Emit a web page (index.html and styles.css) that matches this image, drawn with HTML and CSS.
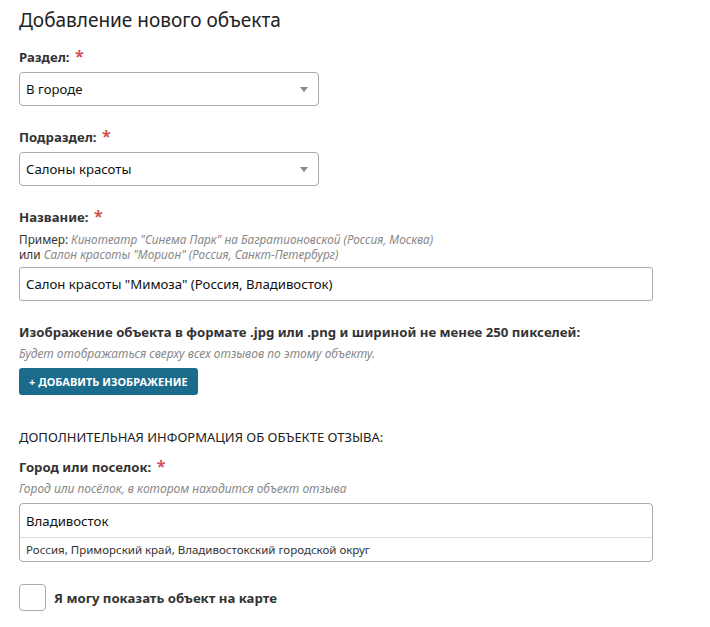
FILE: index.html
```html
<!DOCTYPE html>
<html lang="ru">
<head>
    <meta charset="UTF-8">
    <meta name="viewport" content="width=device-width, initial-scale=1.0">
    <title>Добавление нового объекта</title>
    <link rel="stylesheet" href="styles.css">
</head>
<body>
    <div class="form-page">
        <h1>Добавление нового объекта</h1>

        <div class="field">
            <label class="field-label">Раздел: <span class="req">*</span></label>
            <div class="select-box">
                <span>В городе</span>
                <span class="arrow"></span>
            </div>
        </div>

        <div class="field">
            <label class="field-label">Подраздел: <span class="req">*</span></label>
            <div class="select-box">
                <span>Салоны красоты</span>
                <span class="arrow"></span>
            </div>
        </div>

        <div class="field">
            <label class="field-label">Название: <span class="req">*</span></label>
            <div class="example">
                <div>Пример: <em>Кинотеатр "Синема Парк" на Багратионовской (Россия, Москва)</em></div>
                <div>или <em>Салон красоты "Морион" (Россия, Санкт-Петербург)</em></div>
            </div>
            <input class="text-input" type="text" value='Салон красоты "Мимоза" (Россия, Владивосток)'>
        </div>

        <div class="field">
            <label class="field-label">Изображение объекта в формате .jpg или .png и шириной не менее 250 пикселей:</label>
            <div class="hint">Будет отображаться сверху всех отзывов по этому объекту.</div>
            <button class="add-btn">+ Добавить изображение</button>
        </div>

        <div class="section-title">Дополнительная информация об объекте отзыва:</div>

        <div class="field">
            <label class="field-label">Город или поселок: <span class="req">*</span></label>
            <div class="hint">Город или посёлок, в котором находится объект отзыва</div>
            <div class="city-box">
                <div class="city-name">Владивосток</div>
                <div class="city-region">Россия, Приморский край, Владивостокский городской округ</div>
            </div>
        </div>

        <div class="check-row">
            <span class="checkbox"></span>
            <span class="check-label">Я могу показать объект на карте</span>
        </div>
    </div>
</body>
</html>
```

FILE: styles.css
```css
* {
    box-sizing: border-box;
    margin: 0;
    padding: 0;
}
body {
    background-color: #fff;
    font-family: 'Noto Sans', 'DejaVu Sans', sans-serif;
    color: #222;
    font-size: 13.2px;
}
.form-page {
    padding: 8px 19px 0 19px;
    width: 672px;
}
h1 {
    font-size: 19px;
    line-height: 24px;
    font-weight: normal;
    color: #222;
    margin-bottom: 16px;
}
.field {
    margin-bottom: 22px;
}
.field-label {
    display: block;
    font-weight: bold;
    color: #333;
    font-size: 13.2px;
    line-height: 18px;
    margin-bottom: 6px;
}
.req {
    color: #d05050;
    font-size: 16px;
    line-height: 10px;
    margin-left: 2px;
}
.select-box {
    width: 300px;
    height: 34px;
    border: 1px solid #aaa;
    border-radius: 4px;
    display: flex;
    align-items: center;
    justify-content: space-between;
    padding: 0 10px 0 6px;
    font-size: 13.2px;
    color: #111;
}
.arrow {
    width: 0;
    height: 0;
    border-left: 4px solid transparent;
    border-right: 4px solid transparent;
    border-top: 5px solid #888;
}
.example {
    font-size: 11.8px;
    color: #333;
    line-height: 14.5px;
    margin-bottom: 6px;
}
.example em, .hint {
    color: #888;
    font-style: italic;
}
.hint {
    font-size: 12px;
    line-height: 14px;
    margin-bottom: 7px;
}
.text-input {
    width: 634px;
    height: 34px;
    border: 1px solid #aaa;
    border-radius: 3px;
    padding: 0 6px;
    font-family: inherit;
    font-size: 13.2px;
    color: #111;
}
.add-btn {
    background-color: #1a6b8c;
    color: #fff;
    border: none;
    border-radius: 3px;
    padding: 0 10px;
    height: 27px;
    font-family: inherit;
    font-size: 11px;
    font-weight: bold;
    text-transform: uppercase;
}
.section-title {
    text-transform: uppercase;
    font-size: 13px;
    line-height: 18px;
    color: #222;
    margin-top: 33px;
    margin-bottom: 12px;
}
.city-box {
    width: 634px;
    border: 1px solid #aaa;
    border-radius: 4px;
}
.city-name {
    height: 34px;
    display: flex;
    align-items: center;
    padding: 0 6px;
    font-size: 13.2px;
    color: #111;
    border-bottom: 1px solid #ddd;
}
.city-region {
    height: 23px;
    display: flex;
    align-items: center;
    padding: 0 6px;
    font-size: 11.5px;
    color: #333;
}
.check-row {
    display: flex;
    align-items: center;
    gap: 8px;
}
.field + .check-row {
    margin-top: 2px;
}
.checkbox {
    width: 27px;
    height: 27px;
    border: 1px solid #aaa;
    border-radius: 4px;
}
.check-label {
    font-weight: bold;
    font-size: 13.2px;
    color: #333;
}
```
